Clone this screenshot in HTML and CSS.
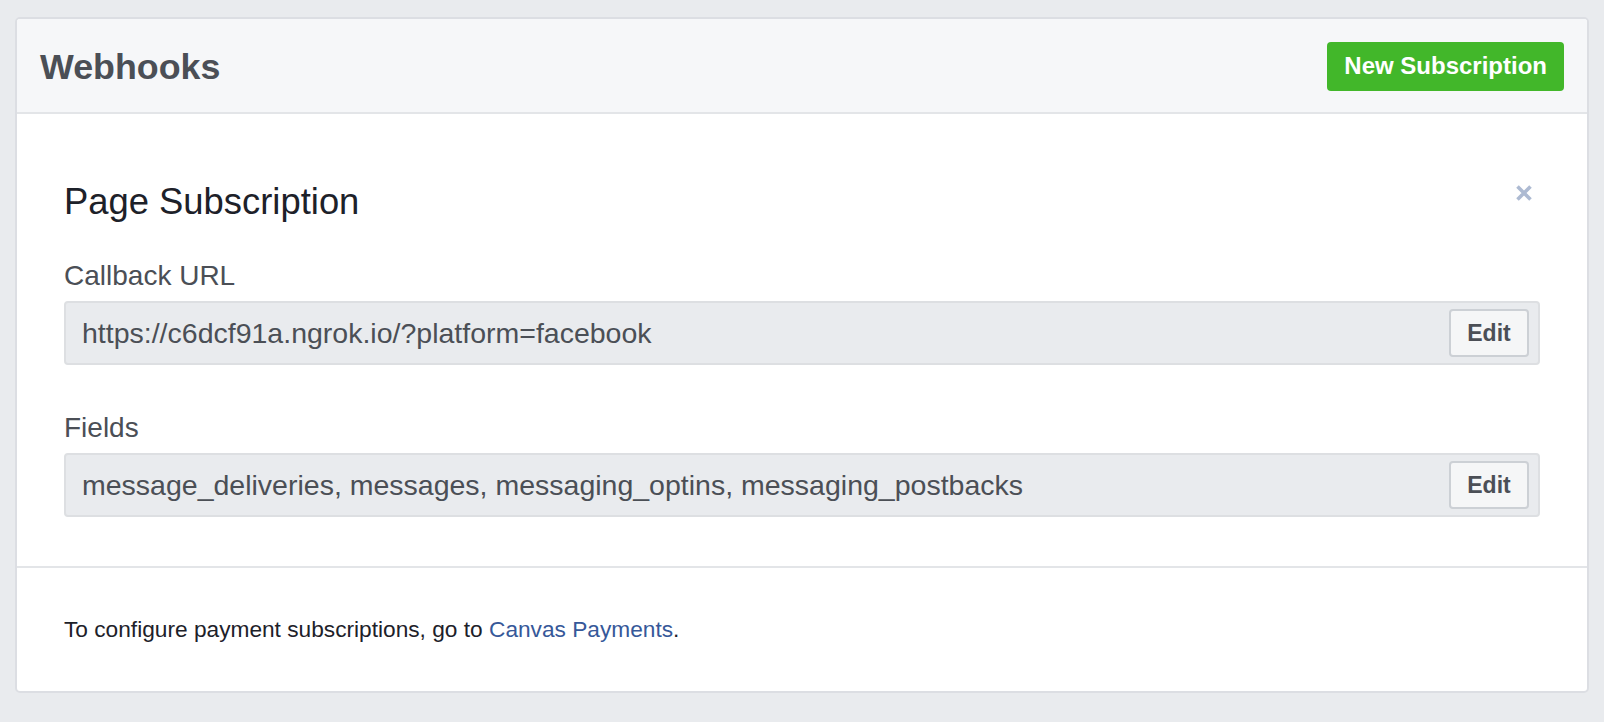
FILE: index.html
```html
<!DOCTYPE html>
<html>
<head>
<meta charset="utf-8">
<title>Webhooks</title>
<link rel="stylesheet" href="styles.css">
</head>
<body>
<div class="card">
  <div class="card-header">
    <h1 class="title">Webhooks</h1>
    <button class="btn-green">New Subscription</button>
  </div>
  <div class="card-body">
    <div class="sub-head">
      <h2 class="sub-title">Page Subscription</h2>
      <span class="close" aria-label="Close">
        <svg width="18" height="18" viewBox="0 0 18 18"><path d="M2.5 2.5 L15.5 15.5 M15.5 2.5 L2.5 15.5" stroke="#adbad2" stroke-width="3.6" stroke-linecap="butt" fill="none"/></svg>
      </span>
    </div>
    <div class="field">
      <div class="label">Callback URL</div>
      <div class="box">
        <span class="value">https://c6dcf91a.ngrok.io/?platform=facebook</span>
        <button class="btn-edit">Edit</button>
      </div>
    </div>
    <div class="field">
      <div class="label">Fields</div>
      <div class="box">
        <span class="value">message_deliveries, messages, messaging_optins, messaging_postbacks</span>
        <button class="btn-edit">Edit</button>
      </div>
    </div>
  </div>
  <div class="card-footer">
    To configure payment subscriptions, go to <a href="#" class="link">Canvas Payments</a>.
  </div>
</div>
</body>
</html>
```
FILE: styles.css
```css
* { box-sizing: border-box; }
html, body { margin: 0; padding: 0; }
body {
  background: #e9ebee;
  font-family: "Liberation Sans", Arial, Helvetica, sans-serif;
  padding: 17px 15px 0 15px;
  height: 722px;
  overflow: hidden;
}
.card {
  background: #fff;
  border: 2px solid #dcdee3;
  border-radius: 5px;
  overflow: hidden;
}
.card-header {
  background: #f6f7f9;
  height: 95px;
  border-bottom: 2px solid #e3e5e8;
  display: flex;
  align-items: center;
  justify-content: space-between;
  padding: 0 23px 0 23px;
}
.title {
  margin: 0;
  font-size: 35.8px;
  font-weight: bold;
  color: #4b4f56;
  line-height: 40px;
  padding-top: 2px;
}
.btn-green {
  background: #42b72a;
  border: none;
  border-radius: 4px;
  color: #fff;
  font-family: inherit;
  font-weight: bold;
  font-size: 24px;
  height: 49px;
  padding: 0 17px;
  margin-top: 1px;
}
.card-body {
  padding: 66px 47px 49px 47px;
  border-bottom: 2px solid #e3e5e8;
}
.sub-head {
  display: flex;
  justify-content: space-between;
  align-items: flex-start;
}
.sub-title {
  margin: 0;
  font-size: 36.4px;
  font-weight: normal;
  color: #1d2129;
  line-height: 44px;
}
.close {
  display: block;
  width: 18px;
  height: 18px;
  margin-top: 4px;
  margin-right: 7px;
}
.close svg { display: block; }
.field { margin-top: 34px; }
.field + .field { margin-top: 45px; }
.label {
  font-size: 28px;
  line-height: 36px;
  color: #4b4f56;
  margin-bottom: 7px;
}
.box {
  height: 64px;
  background: #e9ebee;
  border: 2px solid #dddfe2;
  border-radius: 4px;
  display: flex;
  align-items: center;
  justify-content: space-between;
  padding: 0 9px 0 16px;
}
.value {
  font-size: 28.5px;
  color: #4b4f56;
  white-space: nowrap;
}
.btn-edit {
  width: 80px;
  height: 48px;
  background: #f5f6f7;
  border: 2px solid #ccd0d5;
  border-radius: 4px;
  font-family: inherit;
  font-weight: bold;
  font-size: 23px;
  color: #4b4f56;
  padding: 0;
}
.card-footer {
  padding: 46px 47px 47px 47px;
  font-size: 22.7px;
  line-height: 30px;
  color: #1d2129;
}
.link {
  color: #365899;
  text-decoration: none;
}
```
